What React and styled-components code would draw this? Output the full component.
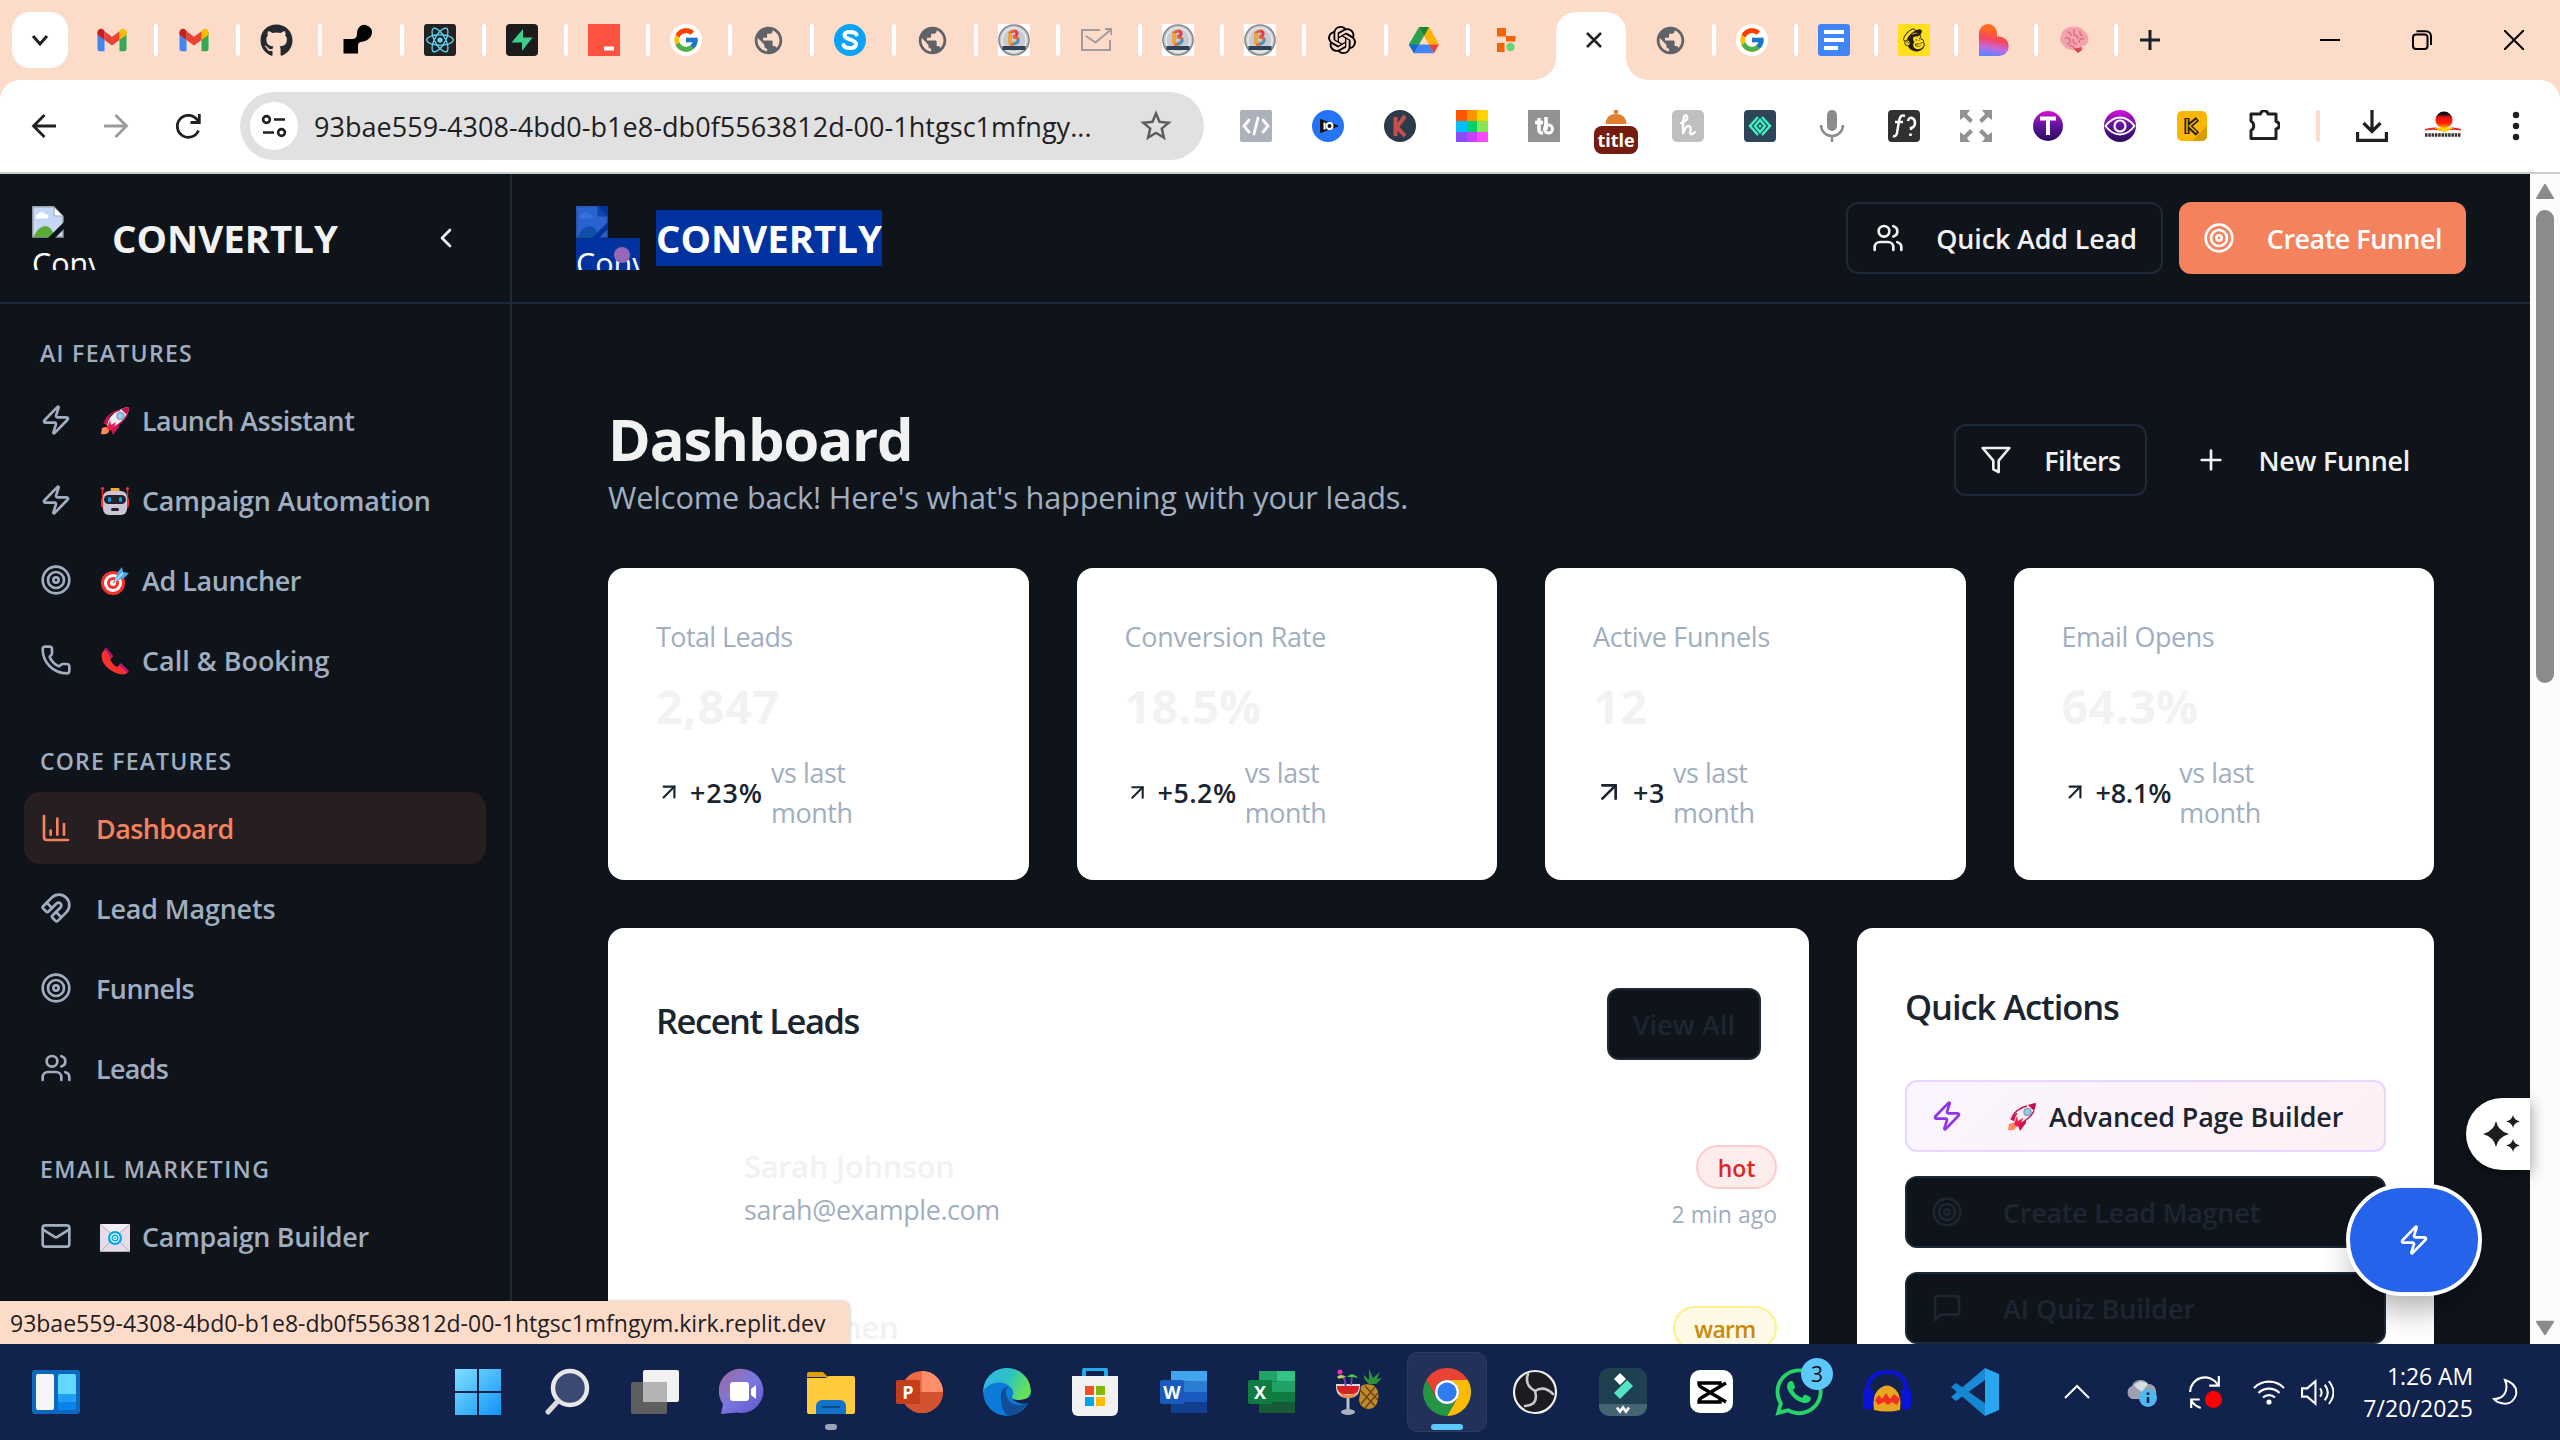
import React from "react";
import styled, { createGlobalStyle, css } from "styled-components";
import { ChevronLeft, Users, Target, ChartColumn, Magnet, Phone, Zap, Mail, Plus, ArrowUpRight } from "lucide-react";
import { FaGithub, FaMailchimp, FaWhatsapp } from "react-icons/fa";
import { FcGoogle } from "react-icons/fc";
import { MdPublic, MdStarOutline } from "react-icons/md";
import { SiOpenai, SiReact } from "react-icons/si";

const c = {
  bg: "#0f141b",
  line: "#1e2939",
  muted: "#a0aec0",
  light: "#f2f2f2",
  coral: "#f4825d",
  ink: "#1a2530",
  peach: "#fcdbc9",
  chrome: "#1f2023",
};

const Global = createGlobalStyle`
  * { box-sizing: border-box; }
  body { margin: 0; overflow: hidden; font-family: "Open Sans", "Noto Sans", sans-serif; }
  svg { display: block; flex-shrink: 0; }
`;

const Screen = styled.div`
  width: 2560px;
  height: 1440px;
  display: flex;
  flex-direction: column;
  overflow: hidden;
`;

/* ---------- Browser chrome ---------- */
const TabStrip = styled.div`
  height: 80px;
  background: ${c.peach};
  display: flex;
  align-items: center;
`;
const TabSearch = styled.div`
  width: 56px;
  height: 56px;
  margin: 0 8px 0 12px;
  border-radius: 18px;
  background: #fff;
  display: grid;
  place-items: center;
`;
const Tab = styled.div`
  width: ${(p) => p.$w || 82}px;
  height: 32px;
  padding-left: ${(p) => p.$pad || 20}px;
  display: flex;
  align-items: center;
  justify-content: space-between;
  &::after {
    content: "";
    width: ${(p) => (p.$last ? 0 : 4)}px;
    height: 32px;
    border-radius: 2px;
    background: #fff;
  }
`;
const ActiveTab = styled.div`
  position: relative;
  align-self: flex-end;
  width: 70px;
  height: 68px;
  padding-left: 6px;
  padding-bottom: 12px;
  background: #fff;
  border-radius: 20px 20px 0 0;
  display: grid;
  place-items: center;
  &::before, &::after {
    content: "";
    position: absolute;
    bottom: 0;
    width: 22px;
    height: 22px;
  }
  &::before { right: 100%; background: radial-gradient(circle at 0 0, transparent 21.5px, #fff 22px); }
  &::after { left: 100%; background: radial-gradient(circle at 100% 0, transparent 21.5px, #fff 22px); }
`;
const NewTab = styled.div`
  margin-left: 16px;
`;
const WindowButtons = styled.div`
  margin-left: auto;
  display: flex;
`;
const WindowButton = styled.div`
  width: 92px;
  display: grid;
  place-items: center;
`;
const ToolbarBack = styled.div`
  height: 94px;
  background: ${c.peach};
`;
const Toolbar = styled.div`
  height: 94px;
  background: #fff;
  border-radius: 20px 20px 0 0;
  border-bottom: 2px solid #c9cdcc;
  padding-left: 28px;
  display: flex;
  align-items: center;
  gap: 40px;
`;
const Omnibox = styled.div`
  width: 964px;
  height: 68px;
  margin: 0 -4px;
  border-radius: 34px;
  background: #e1e1e1;
  padding: 0 29px 0 10px;
  display: flex;
  align-items: center;
`;
const SiteInfo = styled.div`
  width: 48px;
  height: 48px;
  border-radius: 50%;
  background: #fff;
  display: grid;
  place-items: center;
  margin-right: 16px;
`;
const Url = styled.span`
  flex: 1;
  font-size: 27px;
  letter-spacing: 0.05px;
  color: ${c.chrome};
  white-space: nowrap;
`;
const ToolbarDivider = styled.div`
  width: 4px;
  height: 32px;
  border-radius: 2px;
  margin: 0 -4px;
  background: ${c.peach};
`;
const Badge = styled.span`
  width: 44px;
  height: 28px;
  margin: 0 -6px;
  border-radius: 8px;
  background: #761c0e;
  color: #fff;
  font: 700 18px/28px "Open Sans", sans-serif;
  text-align: center;
`;
const TitleExt = styled.div`
  width: 32px;
  height: 44px;
  margin-top: 12px;
  display: flex;
  flex-direction: column;
  gap: 2px;
  align-items: center;
`;

/* ---------- App shell ---------- */
const Viewport = styled.div`
  position: relative;
  height: 1170px;
  display: flex;
  background: ${c.bg};
  overflow: hidden;
`;
const Sidebar = styled.aside`
  width: 512px;
  border-right: 2px solid ${c.line};
`;
const BarHeader = styled.header`
  height: 130px;
  border-bottom: 2px solid ${c.line};
  padding: 0 ${(p) => p.$padX}px;
  padding-right: ${(p) => p.$padR}px;
  display: flex;
  align-items: center;
  gap: 16px;
`;
const BrokenImage = styled.div`
  width: 64px;
  height: 64px;
  overflow: hidden;
  color: #fff;
  font-size: 30.5px;
  line-height: 51px;
  position: relative;
  span {
    display: block;
    height: 32px;
    overflow: hidden;
    background: ${(p) => (p.$selected ? "#0033a0" : "none")};
  }
`;
const HoverDot = styled.i`
  position: absolute;
  left: 38px;
  top: 41px;
  width: 16px;
  height: 16px;
  border-radius: 50%;
  background: #9468b4;
`;
const Brand = styled.span`
  flex: none;
  font-size: 38.4px;
  line-height: 56px;
  font-weight: 700;
  color: ${(p) => (p.$selected ? "#fff" : c.light)};
  background: ${(p) => (p.$selected ? "#0033a0" : "none")};
`;
const Collapse = styled.div`
  margin-left: auto;
  color: ${c.light};
`;
const Spacer = styled.div`
  flex: 1;
`;
const Nav = styled.nav`
  padding: 32px 24px;
  display: flex;
  flex-direction: column;
  gap: 48px;
`;
const NavGroup = styled.div`
  display: flex;
  flex-direction: column;
  gap: 8px;
`;
const NavLabel = styled.div`
  height: 36px;
  margin-bottom: 4px;
  padding: 0 16px;
  font-size: 23px;
  line-height: 34px;
  font-weight: 550;
  letter-spacing: ${(p) => p.$ls}px;
  color: ${c.muted};
`;
const NavItem = styled.div`
  height: 72px;
  padding: 0 16px;
  border-radius: 16px;
  display: flex;
  align-items: center;
  gap: 24px;
  color: ${(p) => (p.$active ? c.coral : c.muted)};
  background: ${(p) => (p.$active ? "#261e20" : "none")};
`;
const Label = styled.span`
  display: inline-flex;
  align-items: center;
  gap: 8px;
  font-size: 26.9px;
  font-weight: 550;
  letter-spacing: ${(p) => p.$ls || 0}px;
  white-space: nowrap;
`;
const EmojiBox = styled.span`
  width: 38px;
  padding-top: 2px;
  display: grid;
  place-items: center;
`;

const Main = styled.main`
  width: 2018px;
`;
const Button = styled.div`
  height: 72px;
  padding: 0 ${(p) => p.$pad || 24}px;
  border-radius: 12px;
  display: flex;
  align-items: center;
  gap: ${(p) => p.$gap || 32}px;
  color: ${c.light};
  ${(p) => p.$kind === "outline" && css`border: 2px solid ${c.line};`}
  ${(p) => p.$kind === "primary" && css`background: ${c.coral}; color: #fff;`}
  ${(p) => p.$kind === "dark" && css`background: ${c.bg}; border: 2px solid #1c2938; color: #1b2632;`}
  ${(p) => p.$kind === "tint" && css`
    background: linear-gradient(135deg, #faf5ff, #fdf2f8 60%, #fdf0f5);
    border: 2px solid #e9d5ff;
    color: ${c.ink};
  `}
`;
const Content = styled.div`
  padding: 96px 96px 0;
`;
const PageHead = styled.div`
  height: 120px;
  display: flex;
  align-items: center;
  justify-content: space-between;
`;
const PageTitle = styled.h1`
  margin: 0;
  font-size: 57.8px;
  line-height: 78px;
  font-weight: 700;
  letter-spacing: -1.1px;
  color: ${c.light};
`;
const PageSub = styled.div`
  height: 42px;
  font-size: 30.7px;
  line-height: 39px;
  letter-spacing: -0.15px;
  color: ${c.muted};
`;
const HeadActions = styled.div`
  display: flex;
`;
const HeadPlus = styled.span`
  display: grid;
  margin-left: 24px;
`;
const Stats = styled.div`
  margin-top: 48px;
  display: grid;
  grid-template-columns: repeat(4, 1fr);
  gap: 48px;
`;
const Card = styled.section`
  background: #fff;
  border-radius: 16px;
`;
const StatCard = styled(Card)`
  height: 312px;
  padding: 48px;
  display: flex;
  flex-direction: column;
  gap: 16px;
`;
const StatLabel = styled.div`
  padding-top: 1px;
  font-size: 26.9px;
  line-height: 40px;
  height: 40px;
  letter-spacing: ${(p) => p.$ls}px;
  color: ${c.muted};
`;
const StatValue = styled.div`
  padding-top: 1px;
  height: 64px;
  font-size: 46.5px;
  line-height: 66px;
  font-weight: 700;
  letter-spacing: ${(p) => p.$ls || 0}px;
  color: ${c.light};
`;
const StatTrend = styled.div`
  height: 80px;
  display: flex;
  align-items: center;
  gap: 8px;
  color: ${c.ink};
`;
const TrendPeriod = styled.span`
  width: 90px;
  padding-top: 1px;
  font-size: 26.9px;
  line-height: 40px;
  letter-spacing: -0.4px;
  color: ${c.muted};
`;
const Panels = styled.div`
  margin-top: 48px;
  display: grid;
  grid-template-columns: 1201px 1fr;
  gap: 48px;
`;
const Panel = styled(Card)`
  height: 600px;
  padding: 60px 48px 0;
`;
const PanelHead = styled.div`
  display: flex;
  justify-content: space-between;
  align-items: flex-start;
`;
const PanelTitle = styled.h2`
  margin: ${(p) => p.$top || 0}px 0 0;
  height: 40px;
  font-size: 34.5px;
  line-height: 37px;
  font-weight: 550;
  letter-spacing: ${(p) => p.$ls}px;
  color: ${c.ink};
`;
const LeadList = styled.div`
  margin-top: 85px;
  padding: 0 32px 0 88px;
  margin-right: -48px;
  display: flex;
  flex-direction: column;
`;
const Lead = styled.div`
  height: 161px;
  display: flex;
  justify-content: space-between;
`;
const LeadText = styled.div`
  display: flex;
  flex-direction: column;
`;
const LeadName = styled.span`
  font-size: 30.7px;
  line-height: 42px;
  margin-bottom: 3px;
  font-weight: 550;
  letter-spacing: -0.2px;
  color: ${c.light};
`;
const LeadMail = styled.span`
  font-size: 26.9px;
  line-height: 40px;
  letter-spacing: -0.4px;
  color: ${c.muted};
`;
const LeadSide = styled(LeadText)`
  align-items: flex-end;
  gap: 9px;
`;
const heat = {
  hot: css`background: #fdecec; border-color: #fecaca; color: #dc2626;`,
  warm: css`background: #fef8e6; border-color: #fef08a; color: #ca8a04; letter-spacing: -0.7px;`,
};
const HeatPill = styled.span`
  height: 44px;
  padding: 0 19.5px;
  border: 2px solid;
  border-radius: 22px;
  font-size: 23px;
  line-height: 42px;
  font-weight: 550;
  ${(p) => heat[p.$heat]}
`;
const LeadTime = styled.span`
  font-size: 23px;
  line-height: 32px;
  color: ${c.muted};
`;
const ActionList = styled.div`
  margin-top: 52px;
  display: flex;
  flex-direction: column;
  gap: 24px;
`;

const Scrollbar = styled.div`
  width: 30px;
  background: #fcfcfc;
  padding: 8px 0 7px;
  display: flex;
  flex-direction: column;
  align-items: center;
`;
const Thumb = styled.div`
  width: 18px;
  height: 473px;
  margin: 10px 0 auto;
  border-radius: 9px;
  background: #8b8b8b;
`;

const StatusBubble = styled.div`
  position: absolute;
  left: 0;
  bottom: 0;
  width: 850px;
  height: 43px;
  padding-left: 10px;
  background: ${c.peach};
  border-radius: 0 8px 0 0;
  box-shadow: 0 0 3px rgba(0, 0, 0, 0.3);
  font-size: 23px;
  line-height: 45px;
  color: ${c.chrome};
  white-space: nowrap;
`;
const Fab = styled.div`
  position: absolute;
  left: 2346px;
  top: 1010px;
  width: 136px;
  height: 112px;
  border: 4px solid #fff;
  border-radius: 56px;
  background: #2563eb;
  box-shadow: 0 20px 30px -6px rgba(0, 0, 0, 0.3);
  color: #fff;
  display: grid;
  place-items: center;
`;
const SparkleTab = styled.div`
  position: absolute;
  left: 2466px;
  top: 924px;
  width: 64px;
  height: 72px;
  border-radius: 36px 0 0 36px;
  background: #fff;
  box-shadow: 0 4px 16px rgba(0, 0, 0, 0.4);
  display: grid;
  place-items: center;
  padding-left: 8px;
`;

/* ---------- Taskbar ---------- */
const Taskbar = styled.div`
  height: 96px;
  background: #11234c;
  display: flex;
  align-items: center;
`;
const Widgets = styled.div`
  margin: 0 355px 0 32px;
`;
const AppCell = styled.div`
  position: relative;
  width: 88px;
  height: 96px;
  display: grid;
  place-items: center;
`;
const AppTile = styled.div`
  width: 80px;
  height: 80px;
  border-radius: 10px;
  display: grid;
  place-items: center;
  background: ${(p) => (p.$active ? "#213159" : "none")};
  border: 1px solid ${(p) => (p.$active ? "#2c3b62" : "transparent")};
`;
const Running = styled.i`
  position: absolute;
  bottom: 10px;
  left: 50%;
  width: ${(p) => p.$w}px;
  height: 6px;
  border-radius: 3px;
  transform: translateX(-50%);
  background: ${(p) => p.$color};
`;
const CountBadge = styled.span`
  position: absolute;
  right: 10px;
  top: 14px;
  width: 32px;
  height: 32px;
  border-radius: 50%;
  background: #5cc8fb;
  color: #111;
  font-size: 21px;
  line-height: 32px;
  text-align: center;
`;
const Tray = styled.div`
  margin-left: 26px;
  display: flex;
  align-items: center;
`;
const TrayCell = styled.div`
  width: ${(p) => p.$w || 64}px;
  display: grid;
  place-items: center;
`;
const Clock = styled.div`
  width: 140px;
  margin-top: -1px;
  font-size: 23px;
  line-height: 32px;
  letter-spacing: -0.1px;
  text-align: right;
  color: #fff;
  div + div { letter-spacing: 0.1px; }
`;

/* ---------- Drawings ---------- */
const S = ({ v = 32, s = 32, w, h, children, ...r }) => (
  <svg viewBox={`0 0 ${v} ${v}`} width={w || s} height={h || s} fill="none" {...r}>{children}</svg>
);
const Gmail = () => (
  <S>
    <path d="M1.5 8v17a2.200 2.200 0 0 0 2.200 2.200H8.500V15z" fill="#4285f4" />
    <path d="M30.500 8v17a2.200 2.200 0 0 1-2.200 2.200H23.500V15z" fill="#34a853" />
    <path d="M23.500 7.500V16l7-5.300V8.200c0-3.200-3.600-4.300-5.800-2.600z" fill="#fbbc04" />
    <path d="M8.500 16V7.200l7.500 5.600 7.500-5.600V16L16 21.500z" fill="#ea4335" />
    <path d="M1.500 8.200v2.500l7 5.300V7.200L7.300 5.600C5 3.900 1.500 5 1.500 8.200z" fill="#c5221f" />
  </S>
);
const Blackshape = () => (
  <S><path d="M1.500 15h7.500c5 0 6-2 6-6a7.500 7.500 0 1 1 14.500 2c-2 5-7 6.500-11 7q-2.500.5-2.500 3.500v8h-14.500z" fill="#000" /></S>
);
const ReactTile = () => (
  <S><rect width="32" height="32" rx="3" fill="#222" /><SiReact x="2" y="2" size={28} color="#61dafb" /></S>
);
const Bolt = () => (
  <S><rect width="32" height="32" rx="4" fill="#1c1c1c" /><path d="M17 5L5.500 18.500H16V27l10.500-13.500H17z" fill="#3ecf8e" /></S>
);
const RedTile = () => (<S><path d="M0 0h32v32H0z" fill="#ff5140" /><path d="M16 22.500h10v4H16z" fill="#fff" /></S>);
const Google = () => (<S><circle cx="16" cy="16" r="16" fill="#fff" /><FcGoogle x="2" y="2" size={28} /></S>);
const Globe = () => <MdPublic size={33} color="#5f6368" />;
const Skype = () => (
  <S><circle cx="16" cy="16" r="16" fill="#0aa3f7" /><path d="M22.500 10.500C21 7.500 11 6.500 10.500 11.200c-.4 4.600 11.800 3.600 11.500 9C21.500 25.500 11 25 9.500 21" stroke="#fff" strokeWidth="4" strokeLinecap="round" /></S>
);
const BLogo = () => (
  <S>
    <path d="M0 0h32v32H0z" fill="#fff" /><circle cx="16" cy="16" r="15" fill="#c9cbd0" stroke="#85888c" strokeWidth="1.600" />
    <circle cx="16" cy="16" r="12" stroke="#e9eaec" strokeWidth="1.500" />
    <path d="M12 20V9q6-4 7 0 0 3-4 4 6 0 5 4-2 4-8 3" stroke="#e8622c" strokeWidth="3" />
    <path d="M12 20V9" stroke="#f4a62a" strokeWidth="3" /><path d="M17 7q4 2 1 5" stroke="#e5326b" strokeWidth="2.500" /><path d="M20 15q1 4-4 5" stroke="#2d9fd8" strokeWidth="2.500" />
    <path d="M4.500 22h23v4h-23z" fill="#2f4257" />
  </S>
);
const Check = () => (
  <S stroke="#a09c9b" strokeWidth="2"><path d="M20 6H2v20h28V16M6 12l9.500 6.500L31 5.500M25 5h6.500v6" /></S>
);
const Drive = () => (
  <S>
    <path d="M11 3h10l10 17.500H21z" fill="#fbb300" /><path d="M11 3L.8 20.500l5.200 8.800L16 12z" fill="#2da24c" /><path d="M11 3h10l-5 9z" fill="#188038" />
    <path d="M.8 20.500h10.400L6 29.300z" fill="#1967d2" /><path d="M11.200 20.500h10l5 8.800H6z" fill="#4285f4" /><path d="M20.800 20.500H31l-5 8.800z" fill="#ea4335" />
  </S>
);
const ReplitApp = () => (
  <S><path d="M7 4h9v8.500H7zM16 12h9.500v5.500H16zM7 19h7.500v9H7z" fill="#f26207" /><circle cx="20.500" cy="23" r="4.200" fill="#5fd87a" /></S>
);
const Docs = () => (<S><rect width="32" height="32" rx="3" fill="#4285f4" /><path d="M6 6h20v4H6zM6 14h20v4H6zM6 22h14v4H6z" fill="#fff" /></S>);
const Chimp = () => (<S><rect width="32" height="32" rx="2" fill="#ffe01b" /><FaMailchimp x="3" y="3" size={26} color="#241c15" /></S>);
const Heart = () => (
  <S>
    <defs><linearGradient id="hg" x1=".6" y1="0" x2=".4" y2="1"><stop offset=".2" stopColor="#fe6a1f" /><stop offset=".5" stopColor="#f7445f" /><stop offset=".75" stopColor="#c468dc" /><stop offset="1" stopColor="#5a86ff" /></linearGradient></defs>
    <path d="M10 0a9 9 0 0 1 9 9v3.500h2A9.500 9.500 0 0 1 21 32H1V9a9 9 0 0 1 9-9z" fill="url(#hg)" />
  </S>
);
const Brain = () => (
  <S>
    <path d="M16 3c4-1 8 1 10 4 4 2 5 8 4 11-1 3-3 4-6 4l1 3-5 4-3-3c-6 0-9-1-11-4-4-2-5-8-2-12C4 5 11 2 16 3z" fill="#f4a3ad" />
    <path d="M9 8q4 0 4 4M7 14q4-1 5 2t-3 4M16 5v6q4 0 4 4M22 7q-1 4 3 5M26 15q-5-1-5 4M15 15q0 5 4 5M11 22q4-1 5 2" stroke="#d9707f" strokeWidth="1.500" />
    <path d="M15 24q4 1 8-1l1 3-4 3z" fill="#d24a5c" />
  </S>
);
const ActiveClose = () => (<S s={20} v={20} stroke="#1f2023" strokeWidth="2.500"><path d="M3 3l14 14M17 3L3 17" /></S>);

const BackIcon = ({ color, flip }) => (
  <S stroke={color} strokeWidth="2.800" transform={flip ? "scale(-1 1)" : undefined}><path d="M28 16H6M16.500 5L5.500 16l11 11" /></S>
);
const Reload = () => (<S stroke={c.chrome} strokeWidth="2.800"><path d="M26.500 20.500A11 11 0 1 1 25 9.500l2 2M27.300 4v8.500H18.500" /></S>);
const Tune = () => (<S s={26} v={26} stroke={c.chrome} strokeWidth="2.600"><circle cx="5.500" cy="6.500" r="3.400" /><path d="M13 6.500h11M2 19.500h11" /><circle cx="20.500" cy="19.500" r="3.400" /></S>);

const extIcons = [
  <S><rect width="32" height="32" rx="2" fill="#adb1bc" /><path d="M9 10l-5 6 5 6M23 10l5 6-5 6M18 8l-4 16" stroke="#fff" strokeWidth="2.800" strokeLinecap="round" /></S>,
  <S><circle cx="16" cy="16" r="16" fill="#2474f5" /><path d="M8.500 9.500v13L26 16z" fill="#111" stroke="#111" /><path d="M12.500 12.500v7" stroke="#fff" strokeWidth="2" /><circle cx="17.500" cy="16" r="3" stroke="#fff" strokeWidth="2" /></S>,
  <S><circle cx="16" cy="16" r="16" fill="#2c3a4a" /><path d="M11.500 7v19M21 6l-8 11 8 9" stroke="#c44f4b" strokeWidth="4" /></S>,
  <S>
    <path d="M0 0h11v11H0z" fill="#ff5500" /><path d="M11 0h10v11H11z" fill="#ff9300" /><path d="M21 0h11v11H21z" fill="#ffd500" />
    <path d="M0 11h11v11H0z" fill="#00bfff" /><path d="M11 11h10v11H11z" fill="#00d068" /><path d="M21 11h11v11H21z" fill="#84e650" />
    <path d="M0 22h11v10H0z" fill="#8a4bff" /><path d="M11 22h10v10H11z" fill="#c840ff" /><path d="M21 22h11v10H21z" fill="#ff48ff" />
  </S>,
  <S><path d="M0 0h32v32H0z" fill="#929292" /><path d="M11 8v12q0 3 4 3M7 12.500h8M18 7v13" stroke="#fff" strokeWidth="3.600" /><circle cx="20.500" cy="19" r="4" stroke="#fff" strokeWidth="3" /></S>,
  <TitleExt><S w={24} h={14} v={24}><path d="M-6 24q1-17 18-17t18 17z" fill="#e0802e" /><circle cx="12" cy="3" r="4" fill="#e0802e" /></S><Badge>title</Badge></TitleExt>,
  <S><rect width="32" height="32" rx="5" fill="#bfbfbf" /><path d="M9 13q8-3 6-7-3-3-4 6v12q3-9 6-8t1 7q1 3 5-1" stroke="#fff" strokeWidth="2.300" strokeLinecap="round" /></S>,
  <S><rect width="32" height="32" rx="4" fill="#2d4459" /><path d="M14 7l-8 9 8 9M18 7l8 9-8 9M16 10l-5 6 5 6 5-6z" stroke="#3ff0c0" strokeWidth="2.500" /><circle cx="16" cy="16" r="1.500" fill="#3ff0c0" /></S>,
  <S><rect x="11" y="0" width="10" height="21" rx="5" fill="#8b8b8b" /><path d="M5 15a11 11 0 0 0 22 0M16 26v6" stroke="#8b8b8b" strokeWidth="2.500" /></S>,
  <S><rect width="32" height="32" rx="4" fill="#313131" /><path d="M17 6q-5-2-6 5L9 23q-1 4-4 3M7 12h8" stroke="#fff" strokeWidth="2.500" /><path d="M20 11q1-4 4-3t3 5-4 5v2M22.500 23.500v2.500" stroke="#fff" strokeWidth="2.600" /></S>,
  <S><path d="M0 0h10L7 4l6 6-3 3-6-6-4 3zM32 0H22l3 4-6 6 3 3 6-6 4 3zM0 32h10l-3-4 6-6-3-3-6 6-4-3zM32 32H22l3-4-6-6 3-3 6 6 4-3z" fill="#929292" /></S>,
  <S><defs><linearGradient id="pg" x1="0" y1="0" x2="0" y2="1"><stop stopColor="#d413d6" /><stop offset=".5" stopColor="#5d1499" /><stop offset="1" stopColor="#2c0a5e" /></linearGradient></defs><circle cx="16" cy="16" r="15" fill="url(#pg)" /><path d="M8 8.500h16M16 8.500V25" stroke="#fff" strokeWidth="4" /></S>,
  <S><circle cx="16" cy="16" r="16" fill="url(#pg)" /><path d="M1.500 16Q8 7.500 16 7.500T30.500 16Q24 24.500 16 24.500T1.500 16z" stroke="#fff" strokeWidth="2" /><circle cx="16" cy="16" r="5.500" stroke="#fff" strokeWidth="2.200" /></S>,
  <S><rect x="1" y="1" width="30" height="30" rx="5" fill="#fbb503" /><path d="M16 31l15-15v10a5 5 0 0 1-5 5z" fill="#d99b00" /><path d="M11 8v16M21.500 9L13 16l8.500 8" stroke="#2b2100" strokeWidth="5" /><path d="M11 9v14M20.500 10L13.500 16l7 6.500" stroke="#fbb503" strokeWidth="1.500" /></S>,
  <S stroke={c.chrome} strokeWidth="3" strokeLinejoin="round"><path d="M3.500 5H13a3.800 3.800 0 0 1 7.500 0h8v7.500a3.800 3.800 0 0 1 0 7.500v9.500h-25v-8a5.500 5.500 0 0 0 0-9.500z" transform="translate(-.5 -1)" /></S>,
];
const Download = () => (<S stroke={c.chrome} strokeWidth="3.200"><path d="M16 0v20M7.500 13l8.500 8.500 8.500-8.500M1.600 22v8.400h28.800V22" /></S>);
const Profile = () => (
  <S v={38} s={38} transform="translate(-4 -3)"><defs><linearGradient id="prf" x1="0" y1="0" x2="0" y2="1"><stop offset=".15" stopColor="#111" /><stop offset=".35" stopColor="#e11" /><stop offset=".7" stopColor="#f20" /><stop offset="1" stopColor="#ffd200" /></linearGradient></defs>
    <circle cx="20" cy="13" r="8.500" fill="url(#prf)" /><path d="M1 22q10-3 19 0 9-3 17 0v1.500q-10-2-17 1-9-3-19-1z" fill="#e8281d" /><path d="M10 21h20l-10 4z" fill="#ffd200" /><path d="M1 28h36" stroke="#333" strokeWidth="3.500" strokeDasharray="2.500 .8" /></S>
);
const Dots = () => (<S><g fill={c.chrome}><circle cx="16" cy="5" r="3.200" /><circle cx="16" cy="16" r="3.200" /><circle cx="16" cy="27" r="3.200" /></g></S>);

const BrokenIcon = ({ selected }) => (
  <S>
    <path d="M.8.8h21L31 10v21H.8z" fill={selected ? "#2a62cf" : "#c6d7f5"} stroke={selected ? "#2a57b8" : "#9aa0a8"} strokeWidth="1.400" />
    <path d="M22 .8V10h9z" fill={selected ? "#0d45b0" : "#fff"} stroke={selected ? "#0d45b0" : "#9aa0a8"} />
    <path d="M22 0h10v10z" fill={selected ? "#0033a0" : c.bg} />
    <path d="M4 12.500a3 3 0 0 1 2-4.500 4 4 0 0 1 7 0 3 3 0 0 1 3 4.500z" fill={selected ? "#3a70d8" : "#fff"} />
    <path d="M1.500 31q5-11 12-11 6 0 9 11z" fill={selected ? "#0e4fa8" : "#5bab36"} />
    <path d="M16 32L32 16v7L23 32z" fill={selected ? "#0033a0" : c.bg} />
  </S>
);

const Rocket = () => (
  <S s={28} v={28}>
    <path d="M1 21q4-2 6 0t0 5q-3 2-7 1z" fill="#ff8a5b" /><path d="M2 16l6-6 5 0-6 9zM18 15v5l-6 8-3-8z" fill="#d1134f" />
    <path d="M6 19Q8 8 18 3q6-3 10-3 0 5-3 10-6 8-16 12z" fill="#f3ebee" /><path d="M20 2q5-2 8-2 0 4-2 8z" fill="#c20f4a" />
    <path d="M4 14Q8 6 19 3M10 22q12-6 16-14" stroke="#c2185b" strokeWidth="1.500" /><circle cx="19.500" cy="9" r="3.500" fill="#8fcbf5" stroke="#8196ad" strokeWidth="1.200" />
    <path d="M6 21l3-8 1 5 5-3-2 5-4 4z" fill="#e91e4d" />
  </S>
);
const Robot = () => (
  <S s={28} v={28}>
    <path d="M1.500 1v20M26.500 1v20" stroke="#e0282e" strokeWidth="1.500" /><circle cx="1.500" cy="1.500" r="1.500" fill="#f8312f" /><circle cx="26.500" cy="1.500" r="1.500" fill="#f8312f" />
    <rect x="0" y="11" width="4" height="9" rx="2" fill="#f8312f" /><rect x="24" y="11" width="4" height="9" rx="2" fill="#f8312f" /><rect x="9.500" y="1" width="9" height="5" rx="1" fill="#f9a62b" />
    <rect x="2" y="4" width="24" height="24" rx="6" fill="#cdc4d6" /><rect x="3" y="8" width="22" height="9" rx="4.500" fill="#26222b" />
    <rect x="7" y="10" width="3" height="5" rx="1.500" fill="#00a6ed" /><rect x="18" y="10" width="3" height="5" rx="1.500" fill="#00a6ed" /><rect x="10" y="21" width="8" height="3" rx="1.500" fill="#26222b" />
  </S>
);
const Dartboard = () => (
  <S s={28} v={28}>
    <circle cx="12" cy="16" r="12" fill="#f8312f" /><circle cx="12" cy="16" r="9" fill="#fff" /><circle cx="12" cy="16" r="6" fill="#f8312f" /><circle cx="12" cy="16" r="3" fill="#fff" />
    <path d="M12 16l7-8" stroke="#7a8a99" strokeWidth="1.200" /><path d="M14 13l3-8 4-5 1 5 6 1-5 5-8 3z" fill="#4aa8f0" /><path d="M14 14l8-8" stroke="#a5dbff" strokeWidth="2" />
  </S>
);
const Handset = () => (
  <S s={28} v={28}><path d="M1 6q-2 9 7 16t17 5l2-3-7-7-4 3q-5-3-7-8l3-2-8-8z" fill="#f8312f" /><path d="M3.500 2L5 .5l7 8L10 11zM18 18l2-2 8 8-1.500 2z" fill="#b4157a" /></S>
);
const MailEmoji = () => (
  <S w={30} h={30} v={30} transform="translate(0 2)"><rect y="0" width="30" height="28" fill="#e6dbe9" /><path d="M0 0l15 13L30 0z" fill="#f3edf6" /><path d="M0 28l13-13M30 28L17 15M0 0l15 13L30 0M0 27.500h30" stroke="#b9aabd" />
    <circle cx="15" cy="14" r="7" fill="#00a6ed" /><circle cx="15" cy="14" r="4.200" stroke="#fff" strokeWidth="1.200" /><circle cx="15" cy="14" r="1.500" stroke="#fff" strokeWidth="1.200" /></S>
);
const FilterIcon = () => (<S v={24} stroke="currentColor" strokeWidth="2" strokeLinejoin="round"><path d="M22 3H2l8 9.460V19l4 2v-8.540z" /></S>);
const MessageIcon = () => (<S v={24} stroke="currentColor" strokeWidth="2" strokeLinejoin="round"><path d="M21 15a2 2 0 0 1-2 2H7l-4 4V5a2 2 0 0 1 2-2h14a2 2 0 0 1 2 2z" /></S>);
const Sparkles = () => (
  <S v={40} s={40}><path d="M14 7q2 10 13 13-11 3-13 13Q12 23 1 20 12 17 14 7zM31 1q1 5 7 6.500-6 1-7 6.500-1-5.500-7-6.500 6-1.500 7-6.500zM31 25q1 5 7 6.500-6 1-7 6.500-1-5.500-7-6.500 6-1.500 7-6.500z" fill="#1e1e1e" /></S>
);

/* taskbar drawings, 48px grid */
const T = (p) => <S v={48} s={48} {...p} />;
const WidgetsIcon = () => (
  <T><rect y="2" width="48" height="44" rx="3" fill="#0d69c0" /><rect x="4" y="6" width="18" height="36" rx="2" fill="#f5f5f5" /><path d="M26 8a2 2 0 0 1 2-2h14a2 2 0 0 1 2 2v18H26z" fill="#62d8ff" /><path d="M26 26h18v8H26z" fill="#1fa0f5" /><path d="M26 34h18v6a2 2 0 0 1-2 2H28a2 2 0 0 1-2-2z" fill="#0a84ea" /></T>
);
const Office = ({ letter, cols, box, round }) => (
  <T>
    {round ? (<><circle cx="27" cy="24" r="21" fill={cols[0]} /><path d="M27 3a21 21 0 0 1 21 21H27z" fill={cols[1]} /><path d="M6 24h42a21 21 0 0 1-42 0z" fill={cols[2]} /></>) : (
      <><path d="M12 3h36v10.500H12z" fill={cols[0]} /><path d="M30 3h18v10.500H30z" fill={cols[4] || cols[0]} /><path d="M12 13.500h36V24H12z" fill={cols[1]} /><path d="M12 24h36v10.500H12z" fill={cols[2]} /><path d="M12 34.500h36V45H12z" fill={cols[3]} /></>
    )}
    <rect x="1" y="12" width="24" height="24" rx="2" fill={box} />
    <text x="13" y="30.500" fontFamily="Open Sans" fontWeight="700" fontSize="18" fill="#fff" textAnchor="middle">{letter}</text>
  </T>
);
const apps = [
  [<T><defs><linearGradient id="wg" x1="0" y1="0" x2="1" y2="1"><stop stopColor="#7fe0ff" /><stop offset="1" stopColor="#1093f5" /></linearGradient></defs><path d="M0 1h22v22H0zM24 1h22v22H24zM0 25h22v22H0zM24 25h22v22H24z" fill="url(#wg)" /></T>],
  [<T><circle cx="27" cy="20" r="17" fill="#3b4a72" stroke="#e8e8e8" strokeWidth="4.500" /><path d="M15 33L5 44" stroke="#dcdcdc" strokeWidth="5" strokeLinecap="round" /></T>],
  [<T><rect x="12" y="2" width="36" height="32" rx="2" fill="#f2f2f2" /><rect x="0" y="14" width="36" height="32" rx="2" fill="#5e5e60" /><path d="M12 14h24v20H12z" fill="#b4b4b4" /></T>],
  [<T><defs><linearGradient id="ch" x1="0" y1="0" x2="1" y2="1"><stop stopColor="#a36a9c" /><stop offset=".5" stopColor="#7a78e0" /><stop offset="1" stopColor="#5b54c8" /></linearGradient></defs><path d="M24 1a22 22 0 1 1-6 43.500L2 46l2-10A22 22 0 0 1 24 1z" fill="url(#ch)" /><rect x="11" y="14" width="19" height="19" rx="3" fill="#fff" /><path d="M32 21l5-4v14l-5-4z" fill="#fff" /></T>],
  [<T><path d="M0 6a2 2 0 0 1 2-2h14l5 5H0z" fill="#e0a000" /><path d="M0 10h18l4-2h24a2 2 0 0 1 2 2v34a2 2 0 0 1-2 2H2a2 2 0 0 1-2-2z" fill="#ffcb3d" /><path d="M9 46V38a6 6 0 0 1 6-6h18a6 6 0 0 1 6 6v8z" fill="#1273c8" /><path d="M15 39h18" stroke="#0c4a8c" strokeWidth="2" /></T>, "dot"],
  [<Office letter="P" round cols={["#ed6c47", "#ff8f6b", "#d35230"]} box="#c43e1c" />],
  [<T>
    <defs>
      <linearGradient id="e1" x1="0" y1="0" x2="1" y2=".3"><stop stopColor="#35b4ee" /><stop offset=".6" stopColor="#2cc3c0" /><stop offset="1" stopColor="#66e05a" /></linearGradient>
      <clipPath id="ec"><circle cx="24" cy="24" r="24" /></clipPath>
    </defs>
    <g clipPath="url(#ec)">
      <circle cx="24" cy="24" r="24" fill="#0c7ad8" /><path d="M0 24A24 24 0 0 1 48 22q0 10-12 10-8 0-7-4 3-4-1-8-6-7-16-5Q3 17 0 24z" fill="url(#e1)" />
      <path d="M18 26q1-7 8-8-4 3-3 8 2 11 14 11 4 0 7-2-6 12-19 13-8-6-7-22z" fill="#114d94" /><path d="M29 28q-2 4 5 4 14 0 14-8v10q-5 3-12 1-8-2-7-7z" fill="#11234c" />
    </g>
  </T>],
  [<T><path d="M13 10V3a2 2 0 0 1 2-2h18a2 2 0 0 1 2 2v7" stroke="#25a9e8" strokeWidth="4" /><path d="M1 8h46v34a6 6 0 0 1-6 6H7a6 6 0 0 1-6-6z" fill="#f2f2f2" /><path d="M14 18h9v9h-9z" fill="#f25022" /><path d="M25 18h9v9h-9z" fill="#7fba00" /><path d="M14 29h9v9h-9z" fill="#00a4ef" /><path d="M25 29h9v9h-9z" fill="#ffb900" /></T>],
  [<Office letter="W" cols={["#41a5ee", "#2b7cd3", "#185abd", "#103f91"]} box="#185abd" />],
  [<Office letter="X" cols={["#21a366", "#21a366", "#107c41", "#185c37", "#33c481"]} box="#107c41" />],
  [<T>
    <path d="M26 18q4-3 12-1 7 4 5 15-2 9-10 9-8-1-9-9z" fill="#c08a2c" /><path d="M25 22l15 16M30 18l13 14M40 19L26 36M43 25L30 40" stroke="#6b4413" strokeWidth="1.500" /><path d="M34 16q-6-5-5-9l5 5 0-11 4 9 7-6-3 7 5-1-6 6z" fill="#2f8f3a" />
    <path d="M1 16h24q1 14-12 14T1 16z" fill="#d9d6dd" /><path d="M2 18h22q0 7-5 8H7q-5-2-5-8z" fill="#d42222" /><path d="M4 24q9 6 18 0-2 6-9 6t-9-6z" fill="#f08c3c" /><path d="M13 30v13" stroke="#b9bfcc" strokeWidth="3" /><ellipse cx="13" cy="44" rx="7" ry="3" fill="#aab1c0" />
    <circle cx="5" cy="4" r="2.500" fill="#f032b4" /><path d="M3 10q3-3 7 0" stroke="#c6cf4a" strokeWidth="3" /><path d="M12 9q5-6 11 1l-5-1z" fill="#3fd13f" /><path d="M9 9l2 10M17 9l-1 8" stroke="#7c3fb0" strokeWidth="1.800" />
  </T>],
  [<T>
    <path d="M24 12h20.780A24 24 0 0 0 3.220 12L13.600 30A12 12 0 0 1 24 12z" fill="#ea4335" /><path d="M44.780 12A24 24 0 0 1 24 48L34.400 30A12 12 0 0 0 24 12z" fill="#fbbc05" /><path d="M3.220 12A24 24 0 0 0 24 48L34.400 30A12 12 0 0 1 13.600 30z" fill="#259443" />
    <circle cx="24" cy="24" r="12" fill="#fff" /><circle cx="24" cy="24" r="9.600" fill="#2f7bf0" />
  </T>, "active"],
  [<T><circle cx="24" cy="24" r="21" fill="#1d1b1f" stroke="#f0f0f0" strokeWidth="2.200" /><path d="M24 23Q13 17 17 6M24 23q9-6 18 3M24 23q4 14-10 15" stroke="#c9c9cc" strokeWidth="2.600" strokeLinecap="round" /></T>],
  [<T><rect width="48" height="48" rx="10" fill="#1f4050" /><path d="M0 36h48v2a10 10 0 0 1-10 10H10A10 10 0 0 1 0 38z" fill="#456474" /><path d="M21 5l6 6-6 6-6-6z" fill="#fff" /><path d="M28 12l6 6-13 13-6-6z" fill="#55e5c5" /><path d="M18 39.500l3 4 3-4 3 4 3-4" stroke="#fff" strokeWidth="2.600" /></T>],
  [<T><rect x="3" y="2" width="43" height="43" rx="10" fill="#fff" /><path d="M39 15L14 30q-2 1-2 4h21v-3M39 34L14 19q-2-1-2-4h21v3" stroke="#000" strokeWidth="3.400" /></T>],
  [<FaWhatsapp size={54} color="#25d366" />, "badge"],
  [<T><path d="M4 26Q4 4 24 4t20 22" stroke="#0a14d8" strokeWidth="4" /><rect x="0" y="20" width="10" height="22" rx="5" fill="#0a14d8" /><rect x="38" y="20" width="10" height="22" rx="5" fill="#0a14d8" /><path d="M11 42q-2-14 4-20 9-9 18 0 6 7 4 20-13 3-26 0z" fill="#e8a723" /><path d="M12 32l4-5 3 4 4-6 4 6 4-5 6 5-3 6-5-3-4 3-4-3-6 3z" fill="#f03020" /></T>],
  [<T><path d="M0 29l5 4L34 12V0z" fill="#1a8ad6" /><path d="M35 36L5 15 0 19l34 29z" fill="#1487d2" /><path d="M34 0l14 6v36l-14 6z" fill="#28a6f0" /></T>],
];

/* ---------- Data ---------- */
const navGroups = [
  { title: "AI FEATURES", ls: 1.3, items: [
    { icon: Zap, emoji: Rocket, text: "Launch Assistant", ls: -0.5 },
    { icon: Zap, emoji: Robot, text: "Campaign Automation", ls: -0.17 },
    { icon: Target, emoji: Dartboard, text: "Ad Launcher", ls: -0.4 },
    { icon: Phone, emoji: Handset, text: "Call & Booking", ls: 0.03 },
  ] },
  { title: "CORE FEATURES", ls: 1.2, items: [
    { icon: ChartColumn, text: "Dashboard", ls: -0.55, active: true },
    { icon: Magnet, text: "Lead Magnets", ls: -0.13 },
    { icon: Target, text: "Funnels", ls: -0.5 },
    { icon: Users, text: "Leads", ls: -0.7 },
  ] },
  { title: "EMAIL MARKETING", ls: 1.5, items: [{ icon: Mail, emoji: MailEmoji, text: "Campaign Builder", ls: -0.25 }] },
];
const stats = [
  { label: "Total Leads", ls: -0.55, value: "2,847", vls: 0.9, delta: "+23%", dls: 0.9, arrow: 26 },
  { label: "Conversion Rate", ls: -0.2, value: "18.5%", vls: 0.4, delta: "+5.2%", dls: 0.5, arrow: 25 },
  { label: "Active Funnels", ls: -0.2, value: "12", vls: 0.6, delta: "+3", dls: 0.6, arrow: 32 },
  { label: "Email Opens", ls: -0.4, value: "64.3%", vls: 0.4, delta: "+8.1%", dls: -0.2, arrow: 26 },
];
const tabsBefore = [Gmail, Gmail, () => <FaGithub size={33} color="#24292f" />, Blackshape, ReactTile, Bolt, RedTile, Google, Globe, Skype, Globe, BLogo, Check, BLogo, BLogo, () => <SiOpenai size={28} color="#000" />, Drive];
const tabsAfter = [[Globe, 90, 28], [Google, 82], [Docs, 80], [Chimp, 80], [Heart, 80], [Brain, 80]];

const IconSlot = styled.span`
  width: 32px;
  height: 32px;
  display: grid;
  place-items: center;
`;

function Browser() {
  return (
    <>
      <TabStrip>
        <TabSearch><S s={18} v={18} stroke={c.chrome} strokeWidth="3"><path d="M2 5l7 8 7-8" /></S></TabSearch>
        {tabsBefore.map((I, i) => <Tab key={i}><IconSlot><I /></IconSlot></Tab>)}
        <Tab $w={86} $last><IconSlot><ReplitApp /></IconSlot></Tab>
        <ActiveTab><ActiveClose /></ActiveTab>
        {tabsAfter.map(([I, w, pad], i) => <Tab key={i} $w={w} $pad={pad}><IconSlot><I /></IconSlot></Tab>)}
        <NewTab><S stroke={c.chrome} strokeWidth="3"><path d="M16 6v20M6 16h20" /></S></NewTab>
        <WindowButtons>
          <WindowButton><S v={20} s={20} stroke="#000" strokeWidth="2"><path d="M0 10h20" /></S></WindowButton>
          <WindowButton><S v={20} s={20} stroke="#000" strokeWidth="2"><rect x="1" y="4.500" width="14.500" height="14.500" rx="3" /><path d="M4.500 1.200H14a5 5 0 0 1 5 5V15" /></S></WindowButton>
          <WindowButton><S v={20} s={20} stroke="#000" strokeWidth="2"><path d="M0 0l20 20M20 0L0 20" /></S></WindowButton>
        </WindowButtons>
      </TabStrip>
      <ToolbarBack>
        <Toolbar>
          <BackIcon color={c.chrome} />
          <BackIcon color="#9b9b9b" flip />
          <Reload />
          <Omnibox>
            <SiteInfo><Tune /></SiteInfo>
            <Url>93bae559-4308-4bd0-b1e8-db0f5563812d-00-1htgsc1mfngy...</Url>
            <MdStarOutline size={38} color="#5c5e62" />
          </Omnibox>
          {extIcons.map((e, i) => <React.Fragment key={i}>{e}</React.Fragment>)}
          <ToolbarDivider />
          <Download />
          <IconSlot><Profile /></IconSlot>
          <Dots />
        </Toolbar>
      </ToolbarBack>
    </>
  );
}

function Logo({ selected }) {
  return (
    <>
      <BrokenImage $selected={selected}>
        <BrokenIcon selected={selected} />
        <span>Convertly</span>
        {selected && <HoverDot />}
      </BrokenImage>
      <Brand $selected={selected}>CONVERTLY</Brand>
    </>
  );
}

function SideNav() {
  return (
    <Sidebar>
      <BarHeader $padX={32} $padR={48}>
        <Logo />
        <Collapse><ChevronLeft size={32} /></Collapse>
      </BarHeader>
      <Nav>
        {navGroups.map((g) => (
          <NavGroup key={g.title}>
            <NavLabel $ls={g.ls}>{g.title}</NavLabel>
            {g.items.map(({ icon: Icon, emoji: Emoji, text, ls, active }) => (
              <NavItem key={text} $active={active}>
                <Icon size={32} />
                <Label $ls={ls}>{Emoji && <EmojiBox><Emoji /></EmojiBox>}{text}</Label>
              </NavItem>
            ))}
          </NavGroup>
        ))}
      </Nav>
    </Sidebar>
  );
}

function Dashboard() {
  return (
    <Content>
      <PageHead>
        <div>
          <PageTitle>Dashboard</PageTitle>
          <PageSub>Welcome back! Here's what's happening with your leads.</PageSub>
        </div>
        <HeadActions>
          <Button $kind="outline"><FilterIcon /><Label $ls={-0.55}>Filters</Label></Button>
          <Button><HeadPlus><Plus size={32} /></HeadPlus><Label $ls={-0.26}>New Funnel</Label></Button>
        </HeadActions>
      </PageHead>
      <Stats>
        {stats.map((s) => (
          <StatCard key={s.label}>
            <StatLabel $ls={s.ls}>{s.label}</StatLabel>
            <StatValue $ls={s.vls}>{s.value}</StatValue>
            <StatTrend>
              <ArrowUpRight size={s.arrow} />
              <Label $ls={s.dls}>{s.delta}</Label>
              <TrendPeriod>vs last month</TrendPeriod>
            </StatTrend>
          </StatCard>
        ))}
      </Stats>
      <Panels>
        <Panel>
          <PanelHead>
            <PanelTitle $ls={-1.45} $top={14}>Recent Leads</PanelTitle>
            <Button $kind="dark"><Label $ls={0.1}>View All</Label></Button>
          </PanelHead>
          <LeadList>
            <Lead>
              <LeadText><LeadName>Sarah Johnson</LeadName><LeadMail>sarah@example.com</LeadMail></LeadText>
              <LeadSide><HeatPill $heat="hot">hot</HeatPill><LeadTime>2 min ago</LeadTime></LeadSide>
            </Lead>
            <Lead>
              <LeadText><LeadName>Mike Chen</LeadName></LeadText>
              <LeadSide><HeatPill $heat="warm">warm</HeatPill></LeadSide>
            </Lead>
          </LeadList>
        </Panel>
        <Panel>
          <PanelTitle $ls={-1.05}>Quick Actions</PanelTitle>
          <ActionList>
            <Button $kind="tint" $gap={40}><Zap size={32} color="#9333ea" /><Label $ls={-0.15}><EmojiBox><Rocket /></EmojiBox>Advanced Page Builder</Label></Button>
            <Button $kind="dark" $gap={40}><Target size={32} /><Label $ls={-0.22}>Create Lead Magnet</Label></Button>
            <Button $kind="dark" $gap={40}><MessageIcon /><Label>AI Quiz Builder</Label></Button>
          </ActionList>
        </Panel>
      </Panels>
    </Content>
  );
}

function TaskbarRow() {
  return (
    <Taskbar>
      <Widgets><WidgetsIcon /></Widgets>
      {apps.map(([icon, state], i) => (
        <AppCell key={i}>
          <AppTile $active={state === "active"}>{icon}</AppTile>
          {state === "active" && <Running $w={32} $color="#5cc8fb" />}
          {state === "dot" && <Running $w={12} $color="#9aa3b8" />}
          {state === "badge" && <CountBadge>3</CountBadge>}
        </AppCell>
      ))}
      <Tray>
        <TrayCell><S v={26} s={26} stroke="#fff" strokeWidth="2"><path d="M1 19L13 7l12 12" /></S></TrayCell>
        <TrayCell>
          <S v={34} s={34}><path d="M8 24a7 7 0 0 1 0-13 9 9 0 0 1 16-2 8 8 0 0 1 4 15z" fill="#9ba1b0" /><path d="M10 11a9 9 0 0 1 14-2l-6 8z" fill="#d8dbe2" /><circle cx="24" cy="23" r="9" fill="#4fb8f0" /><path d="M24 22v6M24 17.500v2.500" stroke="#10244d" strokeWidth="2.600" /></S>
        </TrayCell>
        <TrayCell>
          <S v={32} s={34} stroke="#fff" strokeWidth="2"><path d="M2 16A14 14 0 0 1 28 9M29 1v9h-9M3 31v-8h8M3 24q3 5 9 7" /><circle cx="24" cy="23" r="8" fill="red" stroke="none" /></S>
        </TrayCell>
        <TrayCell>
          <S v={32} s={32} stroke="#fff" strokeWidth="2.200"><path d="M1 12a21 21 0 0 1 30 0M5.500 17a15 15 0 0 1 21 0M10 21.500a9 9 0 0 1 12 0" /><circle cx="16" cy="26" r="2.600" fill="#fff" stroke="none" /></S>
        </TrayCell>
        <TrayCell $w={32}>
          <S v={32} s={33} stroke="#fff" strokeWidth="2"><path d="M1 12v8h5l8 7V5l-8 7zM18.500 12q3 4 0 8M23 8.500q6 7.500 0 15M27 5q9 11 0 22" /></S>
        </TrayCell>
        <Clock><div>1:26 AM</div><div>7/20/2025</div></Clock>
        <TrayCell><S v={28} s={28} stroke="#fff" strokeWidth="2"><path d="M14 2q13 4 11 15-4 11-15 8-5-1-7-4 8 0 11-6t0-13z" /></S></TrayCell>
      </Tray>
    </Taskbar>
  );
}

export default function App() {
  return (
    <Screen>
      <Global />
      <Browser />
      <Viewport>
        <SideNav />
        <Main>
          <BarHeader $padX={64} $padR={64}>
            <Logo selected />
            <Spacer />
            <Button $kind="outline"><Users size={32} /><Label $ls={-0.12}>Quick Add Lead</Label></Button>
            <Button $kind="primary"><Target size={32} /><Label $ls={-0.48}>Create Funnel</Label></Button>
          </BarHeader>
          <Dashboard />
        </Main>
        <Scrollbar>
          <S v={20} s={18}><path d="M10 3l9 15H1z" fill="#8b8b8b" stroke="#8b8b8b" strokeWidth="2" strokeLinejoin="round" /></S>
          <Thumb />
          <S v={20} s={18}><path d="M10 17L1 3h18z" fill="#8b8b8b" stroke="#8b8b8b" strokeWidth="2" strokeLinejoin="round" /></S>
        </Scrollbar>
        <Fab><Zap size={32} /></Fab>
        <SparkleTab><Sparkles /></SparkleTab>
        <StatusBubble>93bae559-4308-4bd0-b1e8-db0f5563812d-00-1htgsc1mfngym.kirk.replit.dev</StatusBubble>
      </Viewport>
      <TaskbarRow />
    </Screen>
  );
}
